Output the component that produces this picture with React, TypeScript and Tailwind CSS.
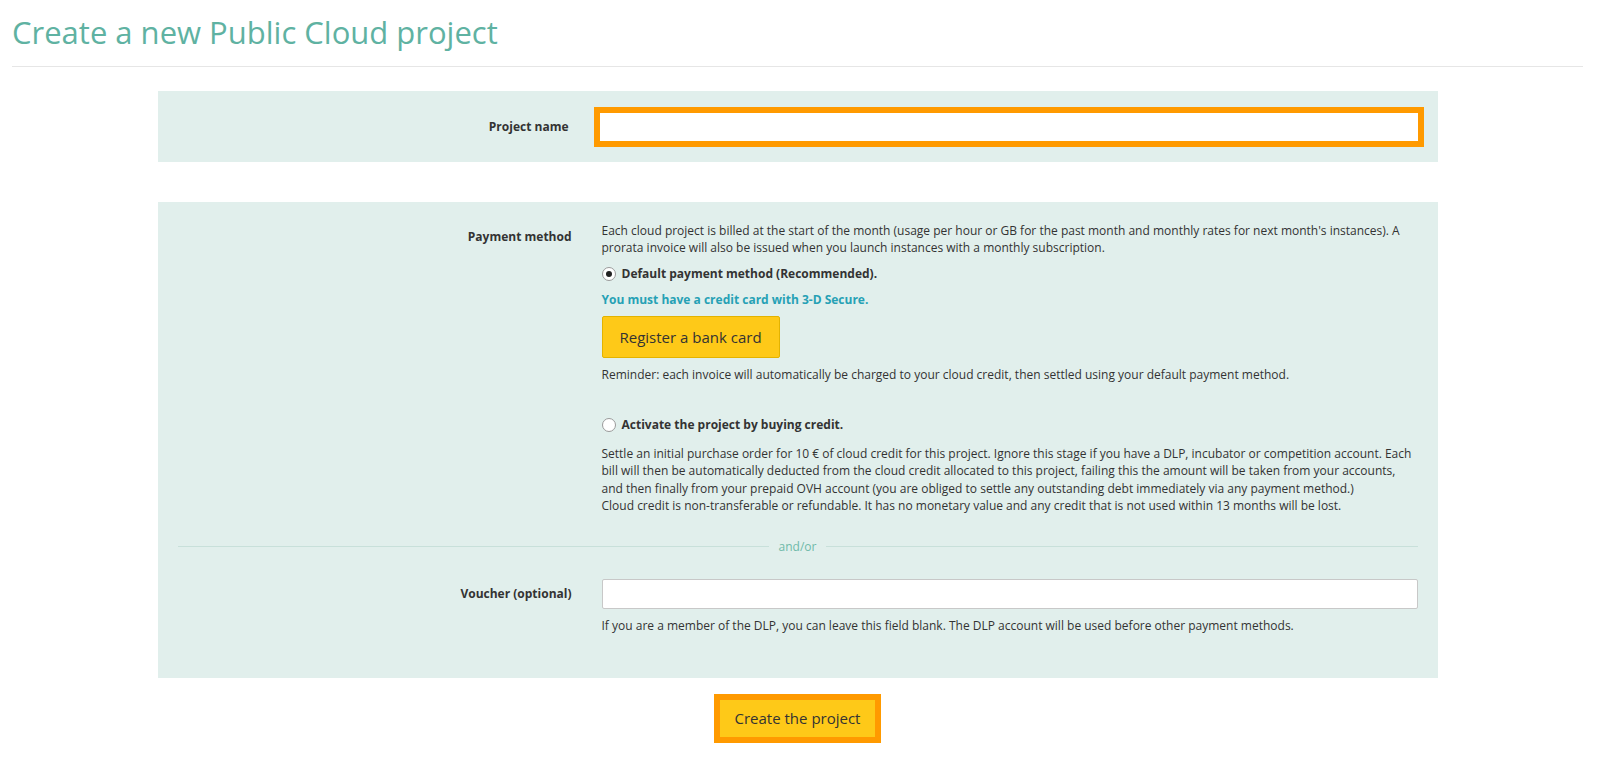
import React from 'react';

const font = { fontFamily: '"Open Sans", "Liberation Sans", sans-serif' };

const Radio: React.FC<{ checked?: boolean }> = ({ checked }) => (
  <span className="flex size-[14px] shrink-0 items-center justify-center rounded-full border border-[#9a9a9a] bg-white">
    {checked && <span className="size-[6px] rounded-full bg-[#222]" />}
  </span>
);

const App: React.FC = () => {
  return (
    <div className="min-h-screen bg-white pl-3 pr-[15px] text-[12px] leading-[1.42857] text-[#333]" style={font}>
      <header className="border-b border-[#e6e6e6] pt-[14px] pb-[16px]">
        <h1 className="text-[31px] leading-[36px] font-normal text-[#5fb2a2]">Create a new Public Cloud project</h1>
      </header>

      <div className="mx-auto mt-6 w-[1280px]">
        <section className="flex items-center bg-[#e1efec] px-5 pt-4 pb-[15px]">
          <label className="w-[407px] shrink-0 pr-[16px] text-right font-bold">Project name</label>
          <div className="flex-1 pl-[15px]">
            <input
              type="text"
              className="-mx-[6px] block h-[40px] w-[calc(100%+12px)] border-[6px] border-[#ff9a00] bg-white px-[9px] text-[14px] outline-none"
              autoFocus
            />
          </div>
        </section>

        <section className="mt-10 bg-[#e1efec] px-5 pt-5 pb-[44px]">
          <div className="flex">
            <label className="w-[407px] shrink-0 pt-[6px] pr-[13px] text-right font-bold">Payment method</label>
            <div className="flex-1 pl-[17px]">
              <p>
                Each cloud project is billed at the start of the month (usage per hour or GB for the past month and monthly rates for next month's instances). A prorata invoice will also be issued when you launch instances with a monthly subscription.
              </p>
              <div className="mt-[9px] flex items-center gap-[6px] leading-[17px]">
                <Radio checked />
                <span className="font-bold">Default payment method (Recommended).</span>
              </div>
              <p className="mt-[9px] leading-[17px] font-bold text-[#26a1b5]">You must have a credit card with 3-D Secure.</p>
              <button className="mt-2 h-[42px] rounded-[2px] border border-[#e3b300] bg-[#fec918] px-[17px] text-[15px] text-[#333]">
                Register a bank card
              </button>
              <p className="mt-2 leading-[17px]">
                Reminder: each invoice will automatically be charged to your cloud credit, then settled using your default payment method.
              </p>
              <div className="mt-[33px] flex items-center gap-[6px] leading-[17px]">
                <Radio />
                <span className="font-bold">Activate the project by buying credit.</span>
              </div>
              <p className="mt-3">
                Settle an initial purchase order for 10 € of cloud credit for this project. Ignore this stage if you have a DLP, incubator or competition account. Each bill will then be automatically deducted from the cloud credit allocated to this project, failing this the amount will be taken from your accounts, and then finally from your prepaid OVH account (you are obliged to settle any outstanding debt immediately via any payment method.)
                <br />
                Cloud credit is non-transferable or refundable. It has no monetary value and any credit that is not used within 13 months will be lost.
              </p>
            </div>
          </div>

          <div className="mt-6 flex items-center gap-[10px] leading-[17px] text-[#6fbaa9]">
            <span className="h-px flex-1 bg-[#c8e0da]" />
            <span>and/or</span>
            <span className="h-px flex-1 bg-[#c8e0da]" />
          </div>

          <div className="mt-6 flex items-center">
            <label className="w-[407px] shrink-0 pr-[13px] text-right font-bold">Voucher (optional)</label>
            <div className="flex-1 pl-[17px]">
              <input type="text" className="block h-[30px] w-full rounded-[2px] border border-[#c8c8c8] bg-white px-2 text-[14px] outline-none" />
            </div>
          </div>
          <div className="flex">
            <div className="w-[407px] shrink-0" />
            <p className="mt-2 flex-1 pl-[17px] leading-[17px]">
              If you are a member of the DLP, you can leave this field blank. The DLP account will be used before other payment methods.
            </p>
          </div>
        </section>

        <div className="mt-4 flex justify-center">
          <button className="h-[49px] border-[6px] border-[#ff9a00] bg-[#fec918] px-[15px] text-[15px] text-[#333]">
            Create the project
          </button>
        </div>
      </div>
    </div>
  );
};

export default App;
